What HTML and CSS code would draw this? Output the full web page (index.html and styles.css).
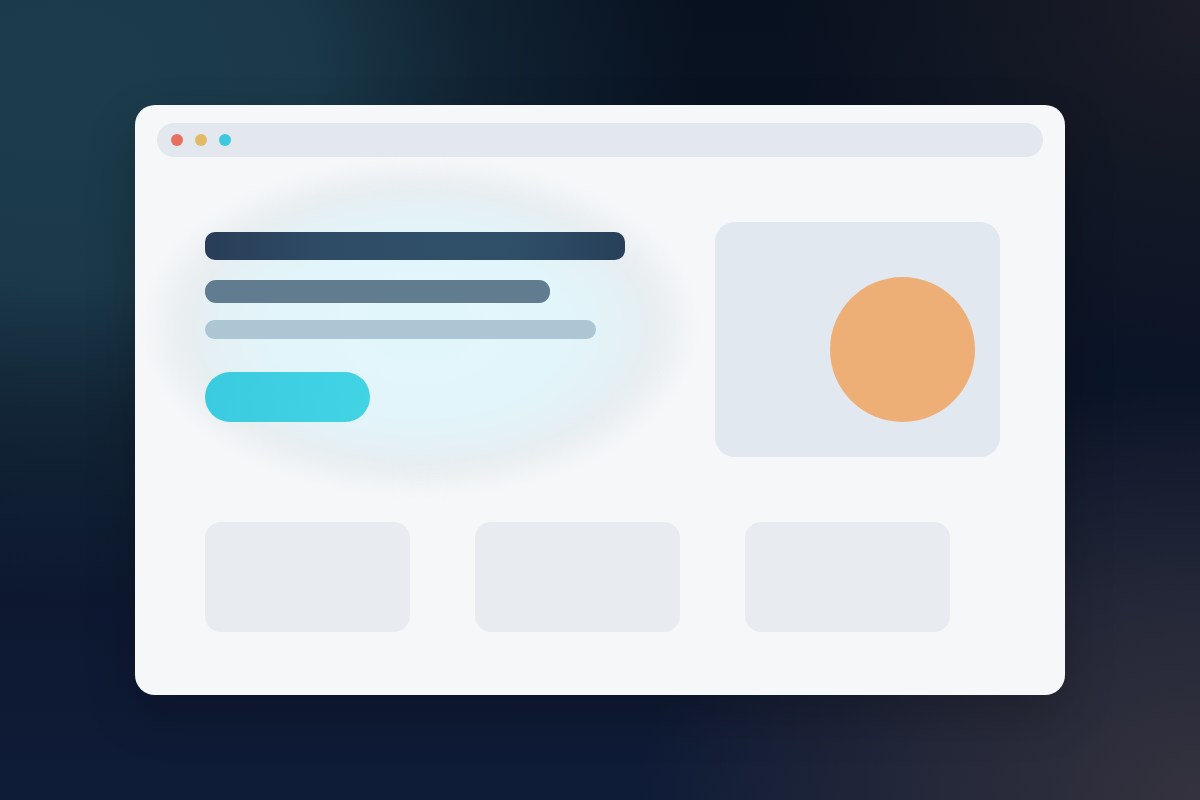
FILE: index.html
```html
<!DOCTYPE html>
<html lang="en">
<head>
<meta charset="utf-8">
<title>Mockup</title>
<link rel="stylesheet" href="styles.css">
</head>
<body>
<div class="stage">
  <div class="window">
    <div class="topbar">
      <span class="dot dot-red"></span>
      <span class="dot dot-yellow"></span>
      <span class="dot dot-cyan"></span>
    </div>
    <div class="content">
      <div class="hero">
        <div class="hero-text">
          <div class="glow"></div>
          <div class="line line-1"></div>
          <div class="line line-2"></div>
          <div class="line line-3"></div>
          <div class="cta"></div>
        </div>
        <div class="media">
          <div class="sun"></div>
        </div>
      </div>
      <div class="cards">
        <div class="card"></div>
        <div class="card"></div>
        <div class="card"></div>
      </div>
    </div>
  </div>
</div>
</body>
</html>
```
FILE: styles.css
```css
html, body {
  margin: 0;
  padding: 0;
  width: 100%;
  height: 100%;
  font-family: "Liberation Sans", Arial, sans-serif;
}
body {
  background:
    radial-gradient(ellipse 640px 520px at 60px 80px, rgba(28, 60, 76, 1) 0%, rgba(27, 58, 74, 0.95) 40%, rgba(22, 46, 62, 0.6) 65%, rgba(12, 24, 40, 0) 100%),
    radial-gradient(ellipse 560px 420px at 1200px 800px, rgba(52, 50, 62, 1) 0%, rgba(45, 45, 58, 0.75) 45%, rgba(20, 26, 45, 0) 100%),
    radial-gradient(ellipse 420px 380px at 1200px 0px, rgba(30, 30, 40, 0.9) 0%, rgba(20, 22, 35, 0) 100%),
    linear-gradient(180deg, #08111f 0%, #0b1529 55%, #0f1c38 100%);
}
.stage {
  display: flex;
  align-items: center;
  justify-content: center;
  width: 1200px;
  height: 800px;
}
.window {
  width: 930px;
  height: 590px;
  box-sizing: border-box;
  background: #f5f7f9;
  border-radius: 20px;
  padding: 18px 22px;
  display: flex;
  flex-direction: column;
  box-shadow: 0 20px 50px rgba(0, 0, 0, 0.2);
}
.topbar {
  height: 34px;
  border-radius: 17px;
  background: #e3e8ef;
  display: flex;
  align-items: center;
  gap: 12px;
  padding-left: 14px;
  flex-shrink: 0;
}
.dot {
  width: 12px;
  height: 12px;
  border-radius: 50%;
}
.dot-red { background: #e8705f; }
.dot-yellow { background: #e3b967; }
.dot-cyan { background: #3ec8e0; }

.content {
  padding: 0 43px 0 48px;
  display: flex;
  flex-direction: column;
}
.hero {
  margin-top: 65px;
  display: flex;
  justify-content: space-between;
  align-items: flex-start;
}
.hero-text {
  position: relative;
  width: 420px;
  padding-top: 10px;
  display: flex;
  flex-direction: column;
  align-items: flex-start;
}
.glow {
  position: absolute;
  left: -60px;
  top: -60px;
  width: 550px;
  height: 330px;
  border-radius: 50%;
  background: radial-gradient(ellipse closest-side, #e1f6fb 0%, #e2f5fa 55%, #e4f1f5 72%, #e8edf0 86%, rgba(236, 240, 243, 0) 100%);
  filter: blur(6px);
  z-index: 0;
}
.line, .cta {
  position: relative;
  z-index: 1;
}
.line-1 {
  width: 420px;
  height: 28px;
  border-radius: 10px;
  background: linear-gradient(90deg, #293d58 0%, #2f4c66 30%, #30506a 70%, #28405a 100%);
}
.line-2 {
  margin-top: 20px;
  width: 345px;
  height: 23px;
  border-radius: 11px;
  background: #617b8f;
}
.line-3 {
  margin-top: 17px;
  width: 391px;
  height: 19px;
  border-radius: 10px;
  background: #adc6d3;
}
.cta {
  margin-top: 33px;
  width: 165px;
  height: 50px;
  border-radius: 25px;
  background: linear-gradient(100deg, #3bcbe0 0%, #42d3e5 100%);
}
.media {
  width: 285px;
  height: 235px;
  box-sizing: border-box;
  border-radius: 20px;
  background: #e1e8f0;
  display: flex;
  justify-content: flex-end;
  align-items: flex-start;
  padding: 55px 25px 0 0;
}
.sun {
  width: 145px;
  height: 145px;
  border-radius: 50%;
  background: #eeaf76;
}
.cards {
  margin-top: 65px;
  display: flex;
  gap: 65px;
}
.card {
  width: 205px;
  height: 110px;
  border-radius: 16px;
  background: #e8ecf0;
}
```
